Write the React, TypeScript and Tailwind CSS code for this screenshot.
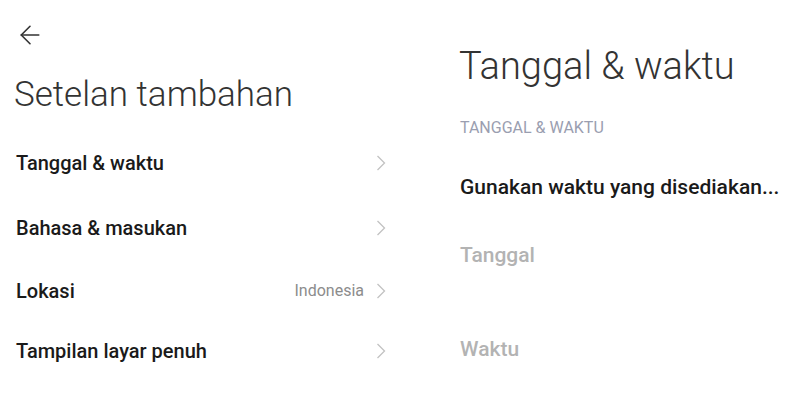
import { ArrowLeft } from 'lucide-react';

interface Item {
  label: string;
  value?: string;
  height: string;
}

const items: Item[] = [
  { label: 'Tanggal & waktu', height: 'h-[64px]' },
  { label: 'Bahasa & masukan', height: 'h-[66px]' },
  { label: 'Lokasi', value: 'Indonesia', height: 'h-[60px]' },
  { label: 'Tampilan layar penuh', height: 'h-[60px]' },
];

const Chevron = () => (
  <svg width="10" height="16" viewBox="0 0 10 16" fill="none" className="shrink-0">
    <path d="M1.5 1 L8.5 8 L1.5 15" stroke="#c2c2c2" strokeWidth="1.3" />
  </svg>
);

const App = () => {
  return (
    <div className="w-[800px] h-[410px] bg-white flex overflow-hidden font-['Roboto',sans-serif]">
      <div className="w-[400px] shrink-0 flex flex-col">
        <div className="h-[73px] pl-[15px] pt-[20px]">
          <ArrowLeft className="w-[30px] h-[30px] text-[#333]" strokeWidth={1.3} />
        </div>
        <h1 className="pl-[14px] h-[58px] text-[35px] font-light text-[#333] leading-[44px]">
          Setelan tambahan
        </h1>
        <ul className="pl-[16px] pr-[14px]">
          {items.map((item) => (
            <li key={item.label} className={`${item.height} flex items-center justify-between`}>
              <span className="text-[20px] font-medium text-[#1a1a1a]">{item.label}</span>
              <span className="flex items-center gap-[12px]">
                {item.value && (
                  <span className="text-[16px] text-[#8c8c8c]">{item.value}</span>
                )}
                <Chevron />
              </span>
            </li>
          ))}
        </ul>
      </div>

      <div className="flex-1 flex flex-col pl-[59px] pt-[42px]">
        <h2 className="text-[38px] font-light text-[#333] leading-[48px] h-[76px]">
          Tanggal &amp; waktu
        </h2>
        <p className="text-[16px] text-[#9a9eb0] leading-[20px] h-[36px] pl-[1px]">
          TANGGAL &amp; WAKTU
        </p>
        <div className="flex flex-col pl-[1px]">
          <div className="h-[68px] flex items-center text-[21px] font-medium text-[#1a1a1a] whitespace-nowrap">
            Gunakan waktu yang disediakan...
          </div>
          <div className="h-[68px] flex items-center text-[21px] font-medium text-[#b3b3b3]">
            Tanggal
          </div>
          <div className="h-[120px] flex items-center text-[21px] font-medium text-[#b3b3b3]">
            Waktu
          </div>
        </div>
      </div>
    </div>
  );
};

export default App;
